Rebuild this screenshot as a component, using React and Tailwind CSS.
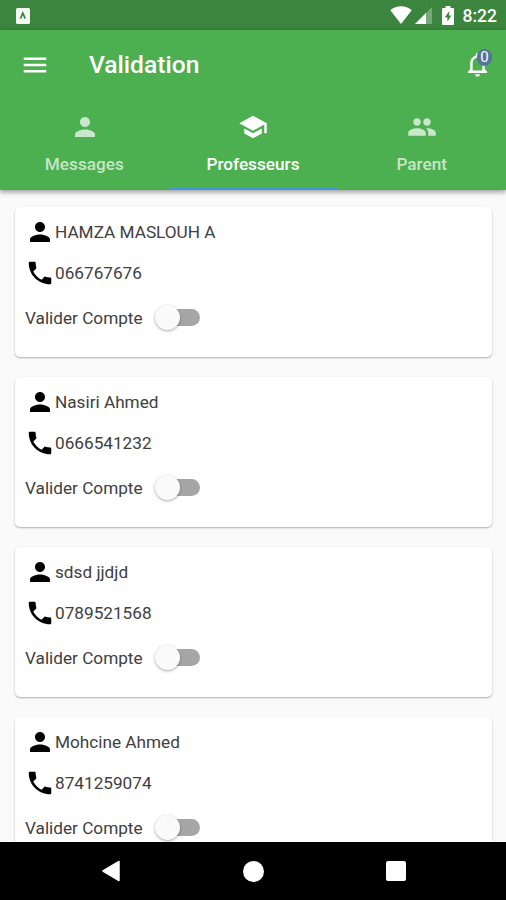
import React, { useState } from 'react';
import { MdMenu, MdNotificationsNone, MdPeople, MdPerson, MdPhone, MdSchool } from 'react-icons/md';

const TABS = [
  { id: 'messages', label: 'Messages', icon: MdPerson },
  { id: 'professeurs', label: 'Professeurs', icon: MdSchool },
  { id: 'parent', label: 'Parent', icon: MdPeople },
];

const TEACHERS = [
  { name: 'HAMZA MASLOUH A', phone: '066767676' },
  { name: 'Nasiri Ahmed', phone: '0666541232' },
  { name: 'sdsd jjdjd', phone: '0789521568' },
  { name: 'Mohcine Ahmed', phone: '8741259074' },
];

function StatusBar() {
  return (
    <div className="flex h-[30px] shrink-0 items-center bg-[#3b853e] pl-4 pr-[9px] text-white">
      <svg width="14" height="16" viewBox="0 0 14 16" className="mt-px">
        <rect width="14" height="16" rx="1.5" fill="#f4faf2" />
        <path d="M4.4 10.5 L6.8 5.2 L9.2 10.5" fill="none" stroke="#3b853e" strokeWidth="1.8" />
      </svg>
      <svg width="22" height="18" viewBox="0 0 22 18" className="ml-auto">
        <path d="M11 18 L0.3 4.2 C6 -1 16 -1 21.7 4.2 Z" fill="currentColor" />
      </svg>
      <svg width="17" height="17" viewBox="0 0 17 17" className="ml-[3px] mt-px">
        <path d="M0 17 L17 0 V17 Z" fill="currentColor" fillOpacity="0.3" />
        <path d="M0 17 L11 6 V17 Z" fill="currentColor" />
      </svg>
      <svg width="12" height="19" viewBox="0 0 12 19" className="ml-[10px]">
        <path d="M3.5 0 H8.5 V2 H11 Q12 2 12 3 V18 Q12 19 11 19 H1 Q0 19 0 18 V3 Q0 2 1 2 H3.5 Z" fill="currentColor" />
        <path d="M7.4 5 L2.8 11.2 H5.4 V15.6 L9.4 9.4 H6.9 Z" fill="#3b853e" />
      </svg>
      <span className="ml-[9px] mt-[3px] text-[17.5px] font-medium leading-none">8:22</span>
    </div>
  );
}

function AppBar() {
  return (
    <div className="flex h-[69px] shrink-0 items-center pl-5 pr-[14px] text-white">
      <MdMenu size={30} />
      <h1 className="ml-[39px] mt-[2px] text-[24.6px] font-medium">Validation</h1>
      <div className="relative ml-auto">
        <MdNotificationsNone size={29} />
        <span className="absolute -top-[1px] right-0 flex h-[17px] w-[15px] items-center justify-center rounded-full bg-[#54769a] text-[15px] leading-none">
          0
        </span>
      </div>
    </div>
  );
}

function Tabs({ active, onChange }) {
  return (
    <div className="grid h-[91px] shrink-0 grid-cols-3">
      {TABS.map(({ id, label, icon: Icon }) => (
        <button
          key={id}
          onClick={() => onChange(id)}
          className={
            active === id
              ? 'flex flex-col items-center border-b-[3px] border-[#4397e0] pt-[13px] text-white'
              : 'flex flex-col items-center border-b-[3px] border-transparent pt-[13px] text-white/70'
          }
        >
          <Icon size={30} className="ml-px" />
          <span className="mt-[9px] text-[17.2px] font-medium leading-[26px]">{label}</span>
        </button>
      ))}
    </div>
  );
}

function Switch({ checked, onChange }) {
  return (
    <button role="switch" aria-checked={checked} onClick={onChange} className="relative -mt-px ml-4 h-[17px] w-[41px] rounded-full bg-[#a6a6a6]">
      <span
        className={
          checked
            ? 'absolute -right-1 -top-1 size-[25px] rounded-full bg-[#4caf50] shadow-[0_1px_3px_rgba(0,0,0,0.35)]'
            : 'absolute -left-1 -top-1 size-[25px] rounded-full bg-[#fafafa] shadow-[0_1px_3px_rgba(0,0,0,0.35)]'
        }
      />
    </button>
  );
}

function TeacherCard({ name, phone }) {
  const [valid, setValid] = useState(false);

  return (
    <div className="h-[150px] shrink-0 rounded-[5px] bg-white pl-[10px] pt-[10px] text-[17.2px] text-[#404040] shadow-[0_1px_2px_rgba(0,0,0,0.3)]">
      <div className="flex h-[30px] items-center">
        <MdPerson size={30} className="text-black" />
        <span className="mt-[2px]">{name}</span>
      </div>
      <div className="mt-[11px] flex h-[30px] items-center">
        <MdPhone size={30} className="text-black" />
        <span className="mt-[2px]">{phone}</span>
      </div>
      <div className="mt-[15px] flex h-[30px] items-center">
        <span className="mt-[2px]">Valider Compte</span>
        <Switch checked={valid} onChange={() => setValid(!valid)} />
      </div>
    </div>
  );
}

function NavigationBar() {
  return (
    <div className="flex h-[58px] shrink-0 items-center justify-between bg-black pl-[102px] pr-[100px] text-white">
      <svg width="18" height="22" viewBox="0 0 18 22">
        <path d="M17 1.5 V20.5 L1 11 Z" fill="currentColor" stroke="currentColor" strokeWidth="1.5" strokeLinejoin="round" />
      </svg>
      <span className="size-[21px] rounded-full bg-white" />
      <span className="size-5 rounded-[2px] bg-white" />
    </div>
  );
}

export default function App() {
  const [tab, setTab] = useState('professeurs');

  return (
    <div className="flex h-[900px] w-[506px] flex-col overflow-hidden bg-[#fafafa] font-[Roboto,sans-serif]">
      <StatusBar />
      <header className="relative z-10 flex shrink-0 flex-col bg-[#4caf50] shadow-[0_2px_5px_rgba(0,0,0,0.4)]">
        <AppBar />
        <Tabs active={tab} onChange={setTab} />
      </header>
      <main className="flex min-h-0 flex-1 flex-col gap-5 overflow-hidden pl-[15px] pr-[14px] pt-[17px]">
        {TEACHERS.map((teacher) => (
          <TeacherCard key={teacher.phone} name={teacher.name} phone={teacher.phone} />
        ))}
      </main>
      <NavigationBar />
    </div>
  );
}
